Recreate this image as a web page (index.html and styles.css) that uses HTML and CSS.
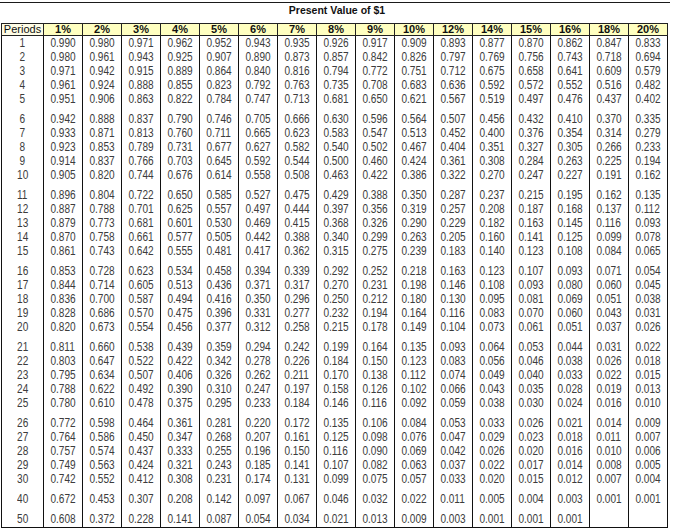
FILE: index.html
```html
<!DOCTYPE html>
<html lang="en">
<head>
<meta charset="utf-8">
<title>Present Value of $1</title>
<link rel="stylesheet" href="styles.css">
</head>
<body>
<div class="page">
  <div class="rule"></div>
  <div class="title">Present Value of $1</div>
  <table class="pv">
    <colgroup>
      <col class="c-per">
      <col><col><col><col><col><col><col><col><col><col><col><col><col><col><col><col>
    </colgroup>
    <thead>
      <tr>
        <th class="per">Periods</th>
        <th>1%</th><th>2%</th><th>3%</th><th>4%</th><th>5%</th><th>6%</th><th>7%</th><th>8%</th>
        <th>9%</th><th>10%</th><th>12%</th><th>14%</th><th>15%</th><th>16%</th><th>18%</th><th>20%</th>
      </tr>
    </thead>
    <tbody>
      <tr><td><span>1</span></td><td><span>0.990</span></td><td><span>0.980</span></td><td><span>0.971</span></td><td><span>0.962</span></td><td><span>0.952</span></td><td><span>0.943</span></td><td><span>0.935</span></td><td><span>0.926</span></td><td><span>0.917</span></td><td><span>0.909</span></td><td><span>0.893</span></td><td><span>0.877</span></td><td><span>0.870</span></td><td><span>0.862</span></td><td><span>0.847</span></td><td><span>0.833</span></td></tr>
      <tr><td><span>2</span></td><td><span>0.980</span></td><td><span>0.961</span></td><td><span>0.943</span></td><td><span>0.925</span></td><td><span>0.907</span></td><td><span>0.890</span></td><td><span>0.873</span></td><td><span>0.857</span></td><td><span>0.842</span></td><td><span>0.826</span></td><td><span>0.797</span></td><td><span>0.769</span></td><td><span>0.756</span></td><td><span>0.743</span></td><td><span>0.718</span></td><td><span>0.694</span></td></tr>
      <tr><td><span>3</span></td><td><span>0.971</span></td><td><span>0.942</span></td><td><span>0.915</span></td><td><span>0.889</span></td><td><span>0.864</span></td><td><span>0.840</span></td><td><span>0.816</span></td><td><span>0.794</span></td><td><span>0.772</span></td><td><span>0.751</span></td><td><span>0.712</span></td><td><span>0.675</span></td><td><span>0.658</span></td><td><span>0.641</span></td><td><span>0.609</span></td><td><span>0.579</span></td></tr>
      <tr><td><span>4</span></td><td><span>0.961</span></td><td><span>0.924</span></td><td><span>0.888</span></td><td><span>0.855</span></td><td><span>0.823</span></td><td><span>0.792</span></td><td><span>0.763</span></td><td><span>0.735</span></td><td><span>0.708</span></td><td><span>0.683</span></td><td><span>0.636</span></td><td><span>0.592</span></td><td><span>0.572</span></td><td><span>0.552</span></td><td><span>0.516</span></td><td><span>0.482</span></td></tr>
      <tr><td><span>5</span></td><td><span>0.951</span></td><td><span>0.906</span></td><td><span>0.863</span></td><td><span>0.822</span></td><td><span>0.784</span></td><td><span>0.747</span></td><td><span>0.713</span></td><td><span>0.681</span></td><td><span>0.650</span></td><td><span>0.621</span></td><td><span>0.567</span></td><td><span>0.519</span></td><td><span>0.497</span></td><td><span>0.476</span></td><td><span>0.437</span></td><td><span>0.402</span></td></tr>
      <tr class="gs"><td><span>6</span></td><td><span>0.942</span></td><td><span>0.888</span></td><td><span>0.837</span></td><td><span>0.790</span></td><td><span>0.746</span></td><td><span>0.705</span></td><td><span>0.666</span></td><td><span>0.630</span></td><td><span>0.596</span></td><td><span>0.564</span></td><td><span>0.507</span></td><td><span>0.456</span></td><td><span>0.432</span></td><td><span>0.410</span></td><td><span>0.370</span></td><td><span>0.335</span></td></tr>
      <tr><td><span>7</span></td><td><span>0.933</span></td><td><span>0.871</span></td><td><span>0.813</span></td><td><span>0.760</span></td><td><span>0.711</span></td><td><span>0.665</span></td><td><span>0.623</span></td><td><span>0.583</span></td><td><span>0.547</span></td><td><span>0.513</span></td><td><span>0.452</span></td><td><span>0.400</span></td><td><span>0.376</span></td><td><span>0.354</span></td><td><span>0.314</span></td><td><span>0.279</span></td></tr>
      <tr><td><span>8</span></td><td><span>0.923</span></td><td><span>0.853</span></td><td><span>0.789</span></td><td><span>0.731</span></td><td><span>0.677</span></td><td><span>0.627</span></td><td><span>0.582</span></td><td><span>0.540</span></td><td><span>0.502</span></td><td><span>0.467</span></td><td><span>0.404</span></td><td><span>0.351</span></td><td><span>0.327</span></td><td><span>0.305</span></td><td><span>0.266</span></td><td><span>0.233</span></td></tr>
      <tr><td><span>9</span></td><td><span>0.914</span></td><td><span>0.837</span></td><td><span>0.766</span></td><td><span>0.703</span></td><td><span>0.645</span></td><td><span>0.592</span></td><td><span>0.544</span></td><td><span>0.500</span></td><td><span>0.460</span></td><td><span>0.424</span></td><td><span>0.361</span></td><td><span>0.308</span></td><td><span>0.284</span></td><td><span>0.263</span></td><td><span>0.225</span></td><td><span>0.194</span></td></tr>
      <tr><td><span>10</span></td><td><span>0.905</span></td><td><span>0.820</span></td><td><span>0.744</span></td><td><span>0.676</span></td><td><span>0.614</span></td><td><span>0.558</span></td><td><span>0.508</span></td><td><span>0.463</span></td><td><span>0.422</span></td><td><span>0.386</span></td><td><span>0.322</span></td><td><span>0.270</span></td><td><span>0.247</span></td><td><span>0.227</span></td><td><span>0.191</span></td><td><span>0.162</span></td></tr>
      <tr class="gs"><td><span>11</span></td><td><span>0.896</span></td><td><span>0.804</span></td><td><span>0.722</span></td><td><span>0.650</span></td><td><span>0.585</span></td><td><span>0.527</span></td><td><span>0.475</span></td><td><span>0.429</span></td><td><span>0.388</span></td><td><span>0.350</span></td><td><span>0.287</span></td><td><span>0.237</span></td><td><span>0.215</span></td><td><span>0.195</span></td><td><span>0.162</span></td><td><span>0.135</span></td></tr>
      <tr><td><span>12</span></td><td><span>0.887</span></td><td><span>0.788</span></td><td><span>0.701</span></td><td><span>0.625</span></td><td><span>0.557</span></td><td><span>0.497</span></td><td><span>0.444</span></td><td><span>0.397</span></td><td><span>0.356</span></td><td><span>0.319</span></td><td><span>0.257</span></td><td><span>0.208</span></td><td><span>0.187</span></td><td><span>0.168</span></td><td><span>0.137</span></td><td><span>0.112</span></td></tr>
      <tr><td><span>13</span></td><td><span>0.879</span></td><td><span>0.773</span></td><td><span>0.681</span></td><td><span>0.601</span></td><td><span>0.530</span></td><td><span>0.469</span></td><td><span>0.415</span></td><td><span>0.368</span></td><td><span>0.326</span></td><td><span>0.290</span></td><td><span>0.229</span></td><td><span>0.182</span></td><td><span>0.163</span></td><td><span>0.145</span></td><td><span>0.116</span></td><td><span>0.093</span></td></tr>
      <tr><td><span>14</span></td><td><span>0.870</span></td><td><span>0.758</span></td><td><span>0.661</span></td><td><span>0.577</span></td><td><span>0.505</span></td><td><span>0.442</span></td><td><span>0.388</span></td><td><span>0.340</span></td><td><span>0.299</span></td><td><span>0.263</span></td><td><span>0.205</span></td><td><span>0.160</span></td><td><span>0.141</span></td><td><span>0.125</span></td><td><span>0.099</span></td><td><span>0.078</span></td></tr>
      <tr><td><span>15</span></td><td><span>0.861</span></td><td><span>0.743</span></td><td><span>0.642</span></td><td><span>0.555</span></td><td><span>0.481</span></td><td><span>0.417</span></td><td><span>0.362</span></td><td><span>0.315</span></td><td><span>0.275</span></td><td><span>0.239</span></td><td><span>0.183</span></td><td><span>0.140</span></td><td><span>0.123</span></td><td><span>0.108</span></td><td><span>0.084</span></td><td><span>0.065</span></td></tr>
      <tr class="gs"><td><span>16</span></td><td><span>0.853</span></td><td><span>0.728</span></td><td><span>0.623</span></td><td><span>0.534</span></td><td><span>0.458</span></td><td><span>0.394</span></td><td><span>0.339</span></td><td><span>0.292</span></td><td><span>0.252</span></td><td><span>0.218</span></td><td><span>0.163</span></td><td><span>0.123</span></td><td><span>0.107</span></td><td><span>0.093</span></td><td><span>0.071</span></td><td><span>0.054</span></td></tr>
      <tr><td><span>17</span></td><td><span>0.844</span></td><td><span>0.714</span></td><td><span>0.605</span></td><td><span>0.513</span></td><td><span>0.436</span></td><td><span>0.371</span></td><td><span>0.317</span></td><td><span>0.270</span></td><td><span>0.231</span></td><td><span>0.198</span></td><td><span>0.146</span></td><td><span>0.108</span></td><td><span>0.093</span></td><td><span>0.080</span></td><td><span>0.060</span></td><td><span>0.045</span></td></tr>
      <tr><td><span>18</span></td><td><span>0.836</span></td><td><span>0.700</span></td><td><span>0.587</span></td><td><span>0.494</span></td><td><span>0.416</span></td><td><span>0.350</span></td><td><span>0.296</span></td><td><span>0.250</span></td><td><span>0.212</span></td><td><span>0.180</span></td><td><span>0.130</span></td><td><span>0.095</span></td><td><span>0.081</span></td><td><span>0.069</span></td><td><span>0.051</span></td><td><span>0.038</span></td></tr>
      <tr><td><span>19</span></td><td><span>0.828</span></td><td><span>0.686</span></td><td><span>0.570</span></td><td><span>0.475</span></td><td><span>0.396</span></td><td><span>0.331</span></td><td><span>0.277</span></td><td><span>0.232</span></td><td><span>0.194</span></td><td><span>0.164</span></td><td><span>0.116</span></td><td><span>0.083</span></td><td><span>0.070</span></td><td><span>0.060</span></td><td><span>0.043</span></td><td><span>0.031</span></td></tr>
      <tr><td><span>20</span></td><td><span>0.820</span></td><td><span>0.673</span></td><td><span>0.554</span></td><td><span>0.456</span></td><td><span>0.377</span></td><td><span>0.312</span></td><td><span>0.258</span></td><td><span>0.215</span></td><td><span>0.178</span></td><td><span>0.149</span></td><td><span>0.104</span></td><td><span>0.073</span></td><td><span>0.061</span></td><td><span>0.051</span></td><td><span>0.037</span></td><td><span>0.026</span></td></tr>
      <tr class="gs"><td><span>21</span></td><td><span>0.811</span></td><td><span>0.660</span></td><td><span>0.538</span></td><td><span>0.439</span></td><td><span>0.359</span></td><td><span>0.294</span></td><td><span>0.242</span></td><td><span>0.199</span></td><td><span>0.164</span></td><td><span>0.135</span></td><td><span>0.093</span></td><td><span>0.064</span></td><td><span>0.053</span></td><td><span>0.044</span></td><td><span>0.031</span></td><td><span>0.022</span></td></tr>
      <tr><td><span>22</span></td><td><span>0.803</span></td><td><span>0.647</span></td><td><span>0.522</span></td><td><span>0.422</span></td><td><span>0.342</span></td><td><span>0.278</span></td><td><span>0.226</span></td><td><span>0.184</span></td><td><span>0.150</span></td><td><span>0.123</span></td><td><span>0.083</span></td><td><span>0.056</span></td><td><span>0.046</span></td><td><span>0.038</span></td><td><span>0.026</span></td><td><span>0.018</span></td></tr>
      <tr><td><span>23</span></td><td><span>0.795</span></td><td><span>0.634</span></td><td><span>0.507</span></td><td><span>0.406</span></td><td><span>0.326</span></td><td><span>0.262</span></td><td><span>0.211</span></td><td><span>0.170</span></td><td><span>0.138</span></td><td><span>0.112</span></td><td><span>0.074</span></td><td><span>0.049</span></td><td><span>0.040</span></td><td><span>0.033</span></td><td><span>0.022</span></td><td><span>0.015</span></td></tr>
      <tr><td><span>24</span></td><td><span>0.788</span></td><td><span>0.622</span></td><td><span>0.492</span></td><td><span>0.390</span></td><td><span>0.310</span></td><td><span>0.247</span></td><td><span>0.197</span></td><td><span>0.158</span></td><td><span>0.126</span></td><td><span>0.102</span></td><td><span>0.066</span></td><td><span>0.043</span></td><td><span>0.035</span></td><td><span>0.028</span></td><td><span>0.019</span></td><td><span>0.013</span></td></tr>
      <tr><td><span>25</span></td><td><span>0.780</span></td><td><span>0.610</span></td><td><span>0.478</span></td><td><span>0.375</span></td><td><span>0.295</span></td><td><span>0.233</span></td><td><span>0.184</span></td><td><span>0.146</span></td><td><span>0.116</span></td><td><span>0.092</span></td><td><span>0.059</span></td><td><span>0.038</span></td><td><span>0.030</span></td><td><span>0.024</span></td><td><span>0.016</span></td><td><span>0.010</span></td></tr>
      <tr class="gs"><td><span>26</span></td><td><span>0.772</span></td><td><span>0.598</span></td><td><span>0.464</span></td><td><span>0.361</span></td><td><span>0.281</span></td><td><span>0.220</span></td><td><span>0.172</span></td><td><span>0.135</span></td><td><span>0.106</span></td><td><span>0.084</span></td><td><span>0.053</span></td><td><span>0.033</span></td><td><span>0.026</span></td><td><span>0.021</span></td><td><span>0.014</span></td><td><span>0.009</span></td></tr>
      <tr><td><span>27</span></td><td><span>0.764</span></td><td><span>0.586</span></td><td><span>0.450</span></td><td><span>0.347</span></td><td><span>0.268</span></td><td><span>0.207</span></td><td><span>0.161</span></td><td><span>0.125</span></td><td><span>0.098</span></td><td><span>0.076</span></td><td><span>0.047</span></td><td><span>0.029</span></td><td><span>0.023</span></td><td><span>0.018</span></td><td><span>0.011</span></td><td><span>0.007</span></td></tr>
      <tr><td><span>28</span></td><td><span>0.757</span></td><td><span>0.574</span></td><td><span>0.437</span></td><td><span>0.333</span></td><td><span>0.255</span></td><td><span>0.196</span></td><td><span>0.150</span></td><td><span>0.116</span></td><td><span>0.090</span></td><td><span>0.069</span></td><td><span>0.042</span></td><td><span>0.026</span></td><td><span>0.020</span></td><td><span>0.016</span></td><td><span>0.010</span></td><td><span>0.006</span></td></tr>
      <tr><td><span>29</span></td><td><span>0.749</span></td><td><span>0.563</span></td><td><span>0.424</span></td><td><span>0.321</span></td><td><span>0.243</span></td><td><span>0.185</span></td><td><span>0.141</span></td><td><span>0.107</span></td><td><span>0.082</span></td><td><span>0.063</span></td><td><span>0.037</span></td><td><span>0.022</span></td><td><span>0.017</span></td><td><span>0.014</span></td><td><span>0.008</span></td><td><span>0.005</span></td></tr>
      <tr><td><span>30</span></td><td><span>0.742</span></td><td><span>0.552</span></td><td><span>0.412</span></td><td><span>0.308</span></td><td><span>0.231</span></td><td><span>0.174</span></td><td><span>0.131</span></td><td><span>0.099</span></td><td><span>0.075</span></td><td><span>0.057</span></td><td><span>0.033</span></td><td><span>0.020</span></td><td><span>0.015</span></td><td><span>0.012</span></td><td><span>0.007</span></td><td><span>0.004</span></td></tr>
      <tr class="gs"><td><span>40</span></td><td><span>0.672</span></td><td><span>0.453</span></td><td><span>0.307</span></td><td><span>0.208</span></td><td><span>0.142</span></td><td><span>0.097</span></td><td><span>0.067</span></td><td><span>0.046</span></td><td><span>0.032</span></td><td><span>0.022</span></td><td><span>0.011</span></td><td><span>0.005</span></td><td><span>0.004</span></td><td><span>0.003</span></td><td><span>0.001</span></td><td><span>0.001</span></td></tr>
      <tr class="gs last"><td><span>50</span></td><td><span>0.608</span></td><td><span>0.372</span></td><td><span>0.228</span></td><td><span>0.141</span></td><td><span>0.087</span></td><td><span>0.054</span></td><td><span>0.034</span></td><td><span>0.021</span></td><td><span>0.013</span></td><td><span>0.009</span></td><td><span>0.003</span></td><td><span>0.001</span></td><td><span>0.001</span></td><td><span>0.001</span></td><td></td><td></td></tr>
    </tbody>
  </table>
</div>
</body>
</html>
```

FILE: styles.css
```css
html, body {
  margin: 0;
  padding: 0;
  background: #ffffff;
}

body {
  font-family: "Liberation Sans", Arial, sans-serif;
  color: #111111;
}

.page {
  width: 682px;
}

.rule {
  width: 670px;
  height: 1px;
  margin-top: 2px;
  background: #1a1a1a;
}

.title {
  width: 674px;
  text-align: center;
  font-weight: bold;
  font-size: 10.5px;
  line-height: 14px;
  color: #111111;
  margin-bottom: 6px;
}

.pv {
  border-collapse: collapse;
  table-layout: fixed;
  width: 667px;
  margin-left: 1px;
  border: 1px solid #111111;
}

.pv .c-per {
  width: 42px;
}

.pv th,
.pv td {
  padding: 0;
  text-align: center;
  border-left: 1px solid #111111;
  border-right: 1px solid #111111;
}

.pv thead th {
  border: 1px solid #222222;
  height: 11px;
  line-height: 11px;
  font-size: 11px;
  font-weight: bold;
  color: #111111;
  background: #ffffc0;
}

.pv thead th.per {
  font-weight: normal;
  background: #fffde6;
}

.pv tbody td {
  height: 14px;
  line-height: 14px;
  font-family: "Liberation Sans", Arial, sans-serif;
  font-size: 12px;
  color: #3c3c3c;
}

/* Arial Narrow substitute: Arial metrics at a narrower width */
.pv tbody td > span {
  display: inline-block;
  transform: scale(0.84, 1.04);
  transform-origin: 50% 50%;
}

.pv tbody tr.gs td {
  padding-top: 6px;
}

.pv tbody tr.last td {
  border-bottom: 1px solid #111111;
  padding-bottom: 1px;
}
```
